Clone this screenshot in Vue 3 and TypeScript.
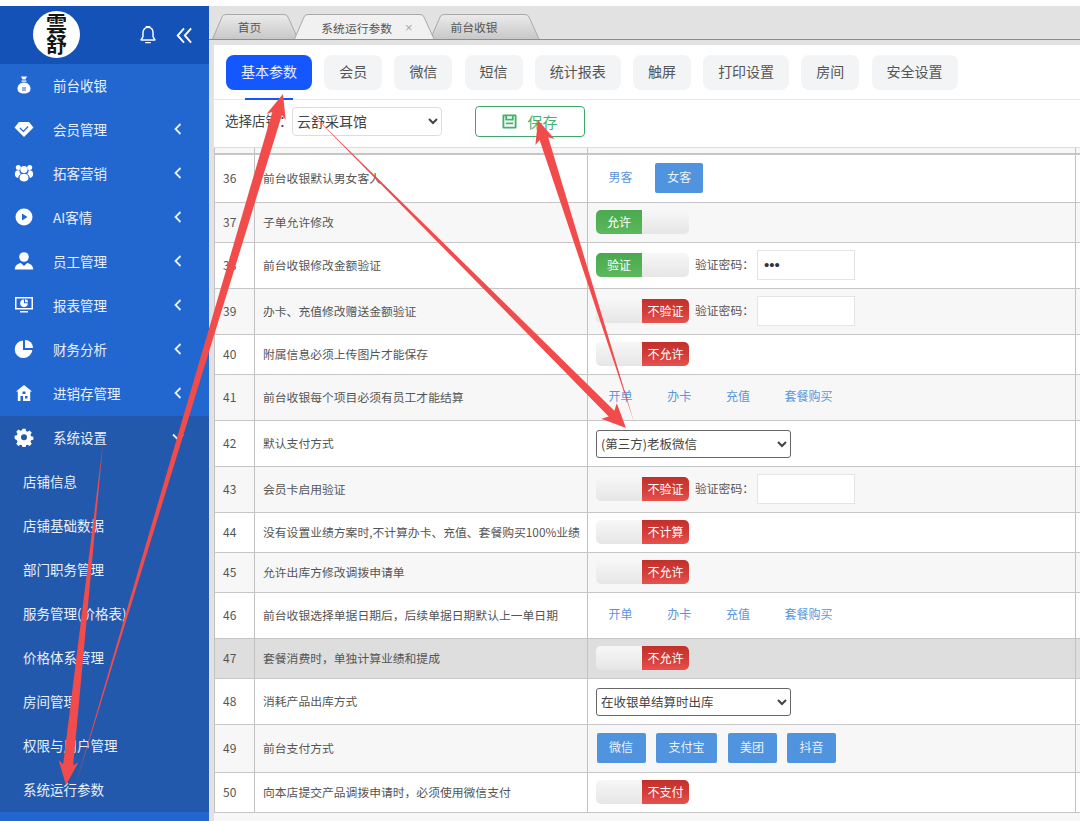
<template>
  <div class="page">
    <aside class="sidebar">
      <div class="side-head">
        <div class="logo"><span>雲舒</span></div>
        <svg class="bell" viewBox="0 0 20 22" width="18" height="20">
          <path d="M10 2.500c-3.600 0-5.600 2.700-5.600 6v4.300L2.300 16.500h15.400l-2.100-3.700V8.500c0-3.300-2-6-5.600-6Z" fill="none" stroke="#fff" stroke-width="1.600" stroke-linejoin="round" />
          <path d="M8 1.800h4M7.500 19.500h5" stroke="#fff" stroke-width="1.600" stroke-linecap="round" />
        </svg>
        <svg class="fold" viewBox="0 0 18 18" width="17" height="17">
          <path d="M8.500 1.500 1.800 9l6.700 7.500M16 1.500 9.300 9l6.700 7.500" fill="none" stroke="#fff" stroke-width="2" />
        </svg>
      </div>
      <nav class="menu">
        <div v-for="item in menu" :key="item.name" class="menu-item" :class="{ opened: item.open }">
          <svg class="menu-icon" viewBox="0 0 20 20" width="20" height="20" v-html="item.icon" />
          <span>{{ item.name }}</span>
          <svg v-if="item.arrow" class="chev" :class="{ down: item.open }" viewBox="0 0 8 12" width="8" height="12">
            <path d="M6.500 1 1.500 6l5 5" fill="none" stroke="#e8f0fb" stroke-width="1.800" />
          </svg>
        </div>
        <div class="submenu">
          <div v-for="sub in subMenu" :key="sub" class="sub-item">{{ sub }}</div>
        </div>
      </nav>
    </aside>

    <main class="main">
      <div class="tabs">
        <div
          v-for="tab in tabs"
          :key="tab.name"
          class="tab"
          :class="{ active: tab.active }"
          :style="{ width: tab.width + 'px', paddingLeft: tab.left + 'px', paddingRight: tab.right + 'px' }"
        >
          <svg class="tab-shape" :width="tab.width" height="25" :viewBox="`0 0 ${tab.width} 25`">
            <path :d="tabPath(tab.width)" :fill="tab.active ? '#f1f1f1' : 'url(#tabFill)'" stroke="#a9a9a9" stroke-width="1" />
          </svg>
          <span class="tab-name">{{ tab.name }}</span>
          <span v-if="tab.active" class="tab-close">×</span>
        </div>
        <svg width="0" height="0" class="defs">
          <defs>
            <linearGradient id="tabFill" x1="0" y1="0" x2="0" y2="1">
              <stop offset="0" stop-color="#ebebeb" />
              <stop offset="1" stop-color="#c8c8c8" />
            </linearGradient>
          </defs>
        </svg>
      </div>

      <div class="content">
        <div class="nav-row">
          <button v-for="(n, i) in navs" :key="n" class="nav-btn" :class="{ on: i === 0 }">{{ n }}</button>
        </div>
        <div class="toolbar">
          <label class="shop-label">选择店铺：</label>
          <select class="shop-select">
            <option>云舒采耳馆</option>
          </select>
          <button class="save">
            <svg viewBox="0 0 16 16" width="15" height="15">
              <path d="M1.500 1.500h13v13h-13z" fill="none" stroke="#45b06f" stroke-width="2" stroke-linejoin="round" />
              <path d="M4.500 2v4h7V2M4 10h8" fill="none" stroke="#45b06f" stroke-width="2" />
            </svg>
            <span>保存</span>
          </button>
        </div>

        <div class="table">
          <div class="row head">
            <div class="cell" /><div class="cell" /><div class="cell" /><div class="cell" />
          </div>
          <div
            v-for="(r, i) in rows"
            :key="r.id"
            class="row"
            :class="{ odd: i % 2 === 1, hover: r.id === 47 }"
            :style="{ height: r.h + 'px' }"
          >
            <div class="cell num">{{ r.id }}</div>
            <div class="cell label">{{ r.label }}</div>
            <div class="cell ctrl">
              <template v-if="r.toggle">
                <div class="toggle">
                  <span v-if="r.on" class="t-on">{{ r.toggle }}</span>
                  <span class="t-blank" />
                  <span v-if="!r.on" class="t-off">{{ r.toggle }}</span>
                </div>
                <template v-if="r.pwd !== undefined">
                  <span class="pwd-label">验证密码：</span>
                  <input class="pwd" type="password" :value="r.pwd" />
                </template>
              </template>
              <select v-else-if="r.select" class="row-select">
                <option>{{ r.select }}</option>
              </select>
              <div v-else class="choices" :class="{ solid: r.id === 49 }">
                <span
                  v-for="c in r.choices"
                  :key="c"
                  class="choice"
                  :class="{ picked: r.picked?.includes(c) }"
                >{{ c }}</span>
              </div>
            </div>
            <div class="cell" />
          </div>
        </div>
      </div>
    </main>

    <svg class="marks" viewBox="0 0 1080 821" width="1080" height="821">
      <polygon v-for="(p, i) in arrows" :key="i" :points="p" fill="#f24b4b" />
    </svg>
  </div>
</template>

<script setup lang="ts">
type Row = {
  id: number
  label: string
  h: number
  toggle?: string
  on?: boolean
  pwd?: string
  select?: string
  choices?: string[]
  picked?: string[]
}

const W = 'fill="#fff"'
const icons = {
  bag: `<path ${W} d="M7 1.500h6l-1.500 3h-3zM7.500 5.500h5v1.300h-5zM10 7.500c4 0 6.500 3 6.500 6.300 0 3.200-2.500 4.700-6.500 4.700s-6.500-1.500-6.500-4.700C3.500 10.500 6 7.500 10 7.500z"/><path d="M8 13h4M8 15h4" stroke="#2267cf" stroke-width="1"/>`,
  gem: `<path ${W} d="M5 3h10l4.500 5.500L10 18 .5 8.500z"/><path d="M6 9l3.500 3.500L14 7.500" fill="none" stroke="#2267cf" stroke-width="1.200"/>`,
  group: `<circle ${W} cx="10" cy="6.500" r="3.600"/><circle ${W} cx="4.300" cy="4.500" r="2.500"/><circle ${W} cx="15.700" cy="4.500" r="2.500"/><path ${W} d="M5.500 15c0-2.800 1.800-4.200 4.500-4.200s4.500 1.400 4.500 4.200c0 2.300-2 3.500-4.500 3.500s-4.500-1.200-4.500-3.500z"/><path ${W} d="M.8 11c0-2.500 1.500-3.800 3.300-3.800 .6 0 1 .1 1.400.4-.2 1.400.4 2.600 1.500 3.300C5.300 11.800 4.300 13.300 4.200 15 2.200 14.500.8 13.200.8 11zM19.200 11c0-2.500-1.500-3.800-3.300-3.800-.6 0-1 .1-1.400.4.2 1.400-.4 2.600-1.500 3.300 1.700.9 2.700 2.400 2.800 4.100 2-.5 3.400-1.800 3.400-4z"/>`,
  play: `<circle ${W} cx="10" cy="10" r="8.500"/><path d="M8 6.500v7l5.500-3.500z" fill="#2267cf"/>`,
  user: `<circle ${W} cx="10" cy="6" r="4.800"/><path ${W} d="M.8 18.500c0-4 3-5.800 6-6.500l3.200 3 3.200-3c3 .7 6 2.500 6 6.500z"/>`,
  screen: `<path ${W} d="M1 2h18v12.500H1zM6 16h8v1.500H6z"/><path d="M2.500 3.500h15V13h-15z" fill="#2267cf"/><path ${W} d="M10 4.500a3.800 3.800 0 1 0 3.800 3.800H10zM11 4.300v3h3a3 3 0 0 0-3-3z"/>`,
  pie: `<path ${W} d="M9 1.500a8.800 8.800 0 1 0 9.300 9.500H9z"/><path ${W} d="M11 1a8 8 0 0 1 8 8h-8z"/>`,
  home: `<path ${W} d="M10 2l8 6.500h-1.800V18H3.800V8.500H2z"/><path d="M8.500 8.500h3v2.500h-3zM6.500 13h2.500v5H6.500zM11 13h2.500v2.500H11z" fill="#2267cf"/>`,
  gear: `<path ${W} fill-rule="evenodd" d="M8.300 1h3.400l.5 2.500 1.700.7 2.200-1.400 2.400 2.400-1.400 2.200.7 1.700 2.500.5v3.400l-2.500.5-.7 1.700 1.400 2.200-2.400 2.400-2.200-1.400-1.700.7-.5 2.500H8.300l-.5-2.500-1.700-.7-2.200 1.400-2.400-2.400 1.400-2.200-.7-1.700L-.3 12V8.600l2.500-.5.700-1.700-1.400-2.200 2.400-2.400L6.100 3.200l1.700-.7zM10 7a3.300 3.300 0 1 0 0 6.600A3.300 3.300 0 0 0 10 7z" transform="translate(.9 .9) scale(.91)"/>`,
}

const menu = [
  { name: '前台收银', icon: icons.bag, arrow: false, open: false },
  { name: '会员管理', icon: icons.gem, arrow: true, open: false },
  { name: '拓客营销', icon: icons.group, arrow: true, open: false },
  { name: 'AI客情', icon: icons.play, arrow: true, open: false },
  { name: '员工管理', icon: icons.user, arrow: true, open: false },
  { name: '报表管理', icon: icons.screen, arrow: true, open: false },
  { name: '财务分析', icon: icons.pie, arrow: true, open: false },
  { name: '进销存管理', icon: icons.home, arrow: true, open: false },
  { name: '系统设置', icon: icons.gear, arrow: true, open: true },
]

const subMenu = ['店铺信息', '店铺基础数据', '部门职务管理', '服务管理(价格表)', '价格体系管理', '房间管理', '权限与用户管理', '系统运行参数']

const tabs = [
  { name: '首页', width: 87, active: false, left: 0, right: 12 },
  { name: '系统运行参数', width: 141, active: true, left: 5, right: 0 },
  { name: '前台收银', width: 110, active: false, left: 0, right: 22 },
]

const navs = ['基本参数', '会员', '微信', '短信', '统计报表', '触屏', '打印设置', '房间', '安全设置']

const sale = ['开单', '办卡', '充值', '套餐购买']

const rows: Row[] = [
  { id: 36, label: '前台收银默认男女客人', h: 48, choices: ['男客', '女客'], picked: ['女客'] },
  { id: 37, label: '子单允许修改', h: 40, toggle: '允许', on: true },
  { id: 38, label: '前台收银修改金额验证', h: 46, toggle: '验证', on: true, pwd: '123' },
  { id: 39, label: '办卡、充值修改赠送金额验证', h: 46, toggle: '不验证', pwd: '' },
  { id: 40, label: '附属信息必须上传图片才能保存', h: 40, toggle: '不允许' },
  { id: 41, label: '前台收银每个项目必须有员工才能结算', h: 46, choices: sale },
  { id: 42, label: '默认支付方式', h: 46, select: '(第三方)老板微信' },
  { id: 43, label: '会员卡启用验证', h: 46, toggle: '不验证', pwd: '' },
  { id: 44, label: '没有设置业绩方案时,不计算办卡、充值、套餐购买100%业绩', h: 40, toggle: '不计算' },
  { id: 45, label: '允许出库方修改调拨申请单', h: 40, toggle: '不允许' },
  { id: 46, label: '前台收银选择单据日期后，后续单据日期默认上一单日期', h: 46, choices: sale },
  { id: 47, label: '套餐消费时，单独计算业绩和提成', h: 40, toggle: '不允许' },
  { id: 48, label: '消耗产品出库方式', h: 46, select: '在收银单结算时出库' },
  { id: 49, label: '前台支付方式', h: 48, choices: ['微信', '支付宝', '美团', '抖音'], picked: ['微信', '支付宝', '美团', '抖音'] },
  { id: 50, label: '向本店提交产品调拨申请时，必须使用微信支付', h: 40, toggle: '不支付' },
]

// tab outline: slanted sides, the bottom edge left open
const tabPath = (w: number) =>
  `M.5 25 L10 3 Q11 .5 14 .5 H${w - 15} Q${w - 12} .5 ${w - 11} 3 L${w - 1} 25`

// tapered arrow, thin tail to barbed head
const arrow = (x1: number, y1: number, x2: number, y2: number, neck: number, barb: number, len: number) => {
  const d = Math.hypot(x2 - x1, y2 - y1)
  const ux = (x2 - x1) / d
  const uy = (y2 - y1) / d
  const nx = -uy
  const ny = ux
  const at = (back: number, off: number) =>
    `${(x2 - ux * back + nx * off).toFixed(1)},${(y2 - uy * back + ny * off).toFixed(1)}`
  return [
    `${x1},${y1}`,
    at(len * 0.85, neck),
    at(len, barb),
    `${x2},${y2}`,
    at(len, -barb),
    at(len * 0.85, -neck),
  ].join(' ')
}

const arrows = [
  arrow(75, 787, 283, 94, 5, 10, 24),
  arrow(103, 443, 66, 785, 5, 10, 24),
  arrow(308, 110, 626, 428, 4, 11, 24),
  arrow(634, 422, 538, 120, 4.500, 10, 23),
]
</script>

<style scoped>
.page {
  position: relative;
  display: flex;
  width: 1080px;
  height: 821px;
  padding-top: 6px;
  box-sizing: border-box;
  overflow: hidden;
  background: #fff;
  font-family: "Noto Sans CJK SC", "Liberation Sans", sans-serif;
  color: #555;
}

.sidebar {
  display: flex;
  flex-direction: column;
  flex: 0 0 209px;
  background: #2267cf;
}

.side-head {
  display: flex;
  align-items: center;
  height: 58px;
  background: #1552b8;
}

.logo {
  display: flex;
  align-items: center;
  justify-content: center;
  width: 47px;
  height: 47px;
  margin-left: 33px;
  margin-bottom: 2px;
  border-radius: 50%;
  background: #fff;
  color: #151515;
  font-size: 21px;
  font-weight: 700;
  line-height: 24px;
  writing-mode: vertical-rl;
}

.bell {
  margin-left: 59px;
}

.fold {
  margin-left: 19px;
}

.menu {
  display: flex;
  flex-direction: column;
}

.menu-item {
  display: flex;
  align-items: center;
  box-sizing: border-box;
  height: 44px;
  padding-left: 14px;
  padding-bottom: 2px;
  color: #e9f0fb;
  font-size: 13.500px;
}

.menu-item.opened {
  background: #2359ac;
}

.menu-icon {
  margin-right: 19px;
}

.chev {
  margin-left: auto;
  margin-right: 27px;
}

.chev.down {
  transform: rotate(-90deg);
}

.submenu {
  background: #2359ac;
}

.sub-item {
  display: flex;
  align-items: center;
  box-sizing: border-box;
  height: 44px;
  padding-left: 23px;
  padding-bottom: 2px;
  color: #e9f0fb;
  font-size: 13.500px;
}

.main {
  display: flex;
  flex-direction: column;
  flex: 1;
  min-width: 0;
  background: #e2e2e2;
}

.tabs {
  display: flex;
  align-items: flex-end;
  flex: 0 0 34px;
  padding-left: 3px;
  border-bottom: 1px solid #8c8c8c;
  box-sizing: border-box;
}

.tab {
  position: relative;
  display: flex;
  align-items: center;
  justify-content: center;
  box-sizing: border-box;
  height: 25px;
  margin-right: -5px;
  color: #555;
  font-size: 11.800px;
}

.tab.active {
  z-index: 1;
  margin-bottom: -1px;
  height: 26px;
}

.tab-shape {
  position: absolute;
  left: 0;
  top: 0;
}

.tab-name {
  position: relative;
}

.tab-close {
  position: relative;
  margin-left: 13px;
  color: #aaa;
  font-size: 13px;
  font-family: "Liberation Sans", sans-serif;
}

.defs {
  position: absolute;
}

.content {
  flex: 1;
  display: flex;
  flex-direction: column;
  min-height: 0;
  margin-top: 5px;
  margin-left: 5px;
  background: #fff;
}

.nav-row {
  display: flex;
  gap: 12.200px;
  flex: 0 0 55px;
  box-sizing: border-box;
  padding: 10px 0 0 12px;
  border-bottom: 1px solid #e6e6e6;
}

.nav-btn {
  position: relative;
  height: 35px;
  padding: 0 15px 3px;
  border: 0;
  border-radius: 8px;
  background: #f2f4f6;
  color: #555;
  font: 14px "Noto Sans CJK SC", sans-serif;
}

.nav-btn.on {
  background: #1557ff;
  color: #e8efff;
}

.nav-btn.on::after {
  content: "";
  position: absolute;
  left: 19px;
  right: 19px;
  bottom: -10px;
  height: 2px;
  background: #1557ff;
}

.toolbar {
  display: flex;
  align-items: center;
  flex: 0 0 47px;
  padding-left: 11px;
  padding-bottom: 5px;
  box-sizing: border-box;
}

.shop-label {
  font-size: 13.500px;
  width: 67px;
  padding-bottom: 3px;
  white-space: nowrap;
  color: #444;
}

.shop-select {
  width: 150px;
  height: 29px;
  padding-left: 0;
  border: 1px solid #ddd;
  border-radius: 4px;
  background: #fff;
  color: #444;
  font: 14px "Noto Sans CJK SC", sans-serif;
}

.save {
  display: flex;
  align-items: center;
  justify-content: center;
  gap: 10px;
  width: 110px;
  height: 31px;
  margin-left: 33px;
  border: 1px solid #3fa96b;
  border-radius: 4px;
  background: #fff;
  color: #45b06f;
  font: 15px "Noto Sans CJK SC", sans-serif;
}

.table {
  flex: 1;
  min-height: 0;
  border-top: 1px solid #dcdcdc;
  background: #f7f7f7;
}

.row {
  display: grid;
  grid-template-columns: 40px 333px 488px 1fr;
  box-sizing: border-box;
  border-bottom: 1px solid #c6c6c6;
  background: #fff;
}

.row.head {
  height: 7px;
  border-bottom: 2px solid #c6c6c6;
  background: #f7f7f7;
}

.row.odd {
  background: #f7f7f7;
}

.row.hover {
  background: #dedede;
}

.cell {
  display: flex;
  align-items: center;
  min-width: 0;
  border-left: 1px solid #c2c2c2;
  font-size: 11.800px;
  white-space: nowrap;
}

.num {
  padding-left: 8px;
  padding-bottom: 2px;
  font-size: 12px;
}

.label {
  padding-left: 8px;
  padding-bottom: 2px;
}

.ctrl {
  padding-left: 8px;
  padding-bottom: 2px;
}

.toggle {
  display: flex;
  flex: 0 0 93px;
  height: 24px;
  border-radius: 5px;
  overflow: hidden;
  background: linear-gradient(#f7f7f7, #e6e6e6);
  color: #fff;
  font-size: 12px;
  line-height: 23px;
  text-align: center;
}

.t-on {
  flex: 0 0 46px;
  background: linear-gradient(#4aa94e, #5cb85c);
}

.t-off {
  flex: 0 0 47px;
  background: linear-gradient(#c2302c, #d63f3b 60%, #e8524e);
}

.t-blank {
  flex: 1;
}

.pwd-label {
  margin-left: 6px;
  width: 62px;
  padding-bottom: 2px;
  font-size: 11.800px;
  color: #555;
}

.pwd {
  width: 98px;
  height: 30px;
  box-sizing: border-box;
  padding: 0 6px;
  border: 1px solid #e4e4e4;
  background: #fff;
  color: #333;
  font-size: 15px;
  outline: none;
}

.row-select {
  width: 195px;
  height: 28px;
  margin-top: 2px;
  padding-left: 0;
  border: 1px solid #666;
  border-radius: 3px;
  background: #fff;
  color: #444;
  font: 12.500px "Noto Sans CJK SC", sans-serif;
}

.choices {
  display: flex;
  gap: 10.700px;
  margin-left: 0.500px;
}

.choices.solid {
  gap: 10.500px;
}

.choice {
  height: 30px;
  padding: 0 12px;
  border-radius: 2px;
  color: #5b95dc;
  font-size: 12px;
  line-height: 28px;
}

.solid .choice {
  padding: 0 12.500px;
}

.choice.picked {
  background: #5093de;
  color: #eaf2fc;
}

.marks {
  position: absolute;
  left: 0;
  top: 0;
  pointer-events: none;
}
</style>
